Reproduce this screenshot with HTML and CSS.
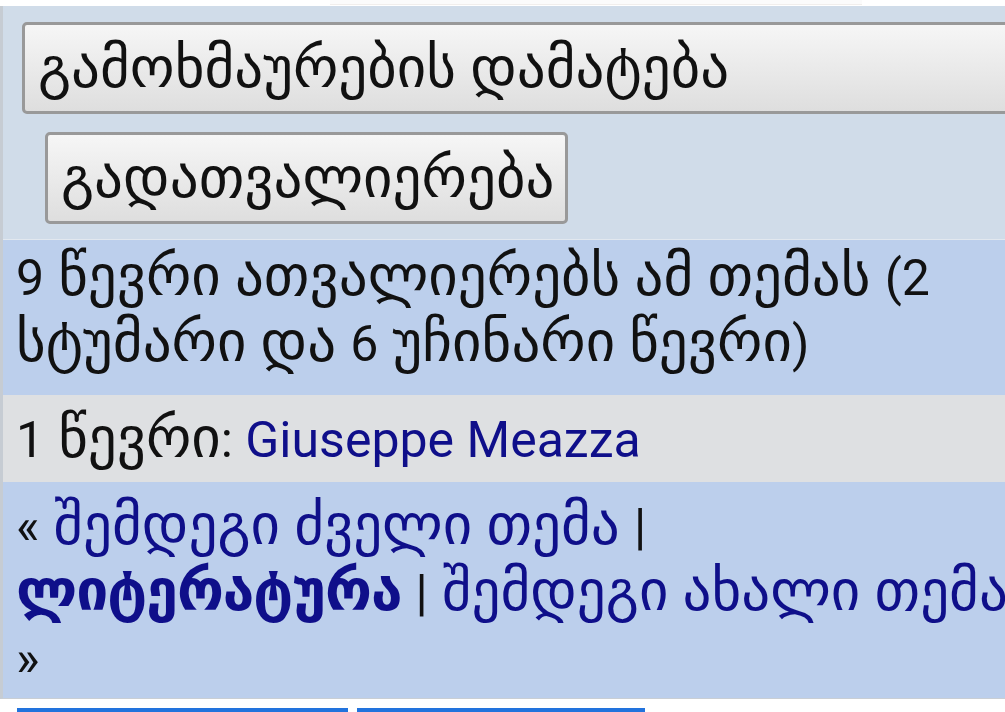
FILE: index.html
```html
<!DOCTYPE html>
<html lang="ka">
<head>
  <meta charset="UTF-8">
  <title>თემა</title>
  <meta name="viewport" content="width=device-width, initial-scale=1.0"/>
  <link rel="stylesheet" href="styles.css">
</head>
<body>
  <div class="topbar"><div class="search-edge"></div></div>
  <div class="panel">
    <div class="actions">
      <button class="btn btn-wide">გამოხმაურების დამატება</button>
      <button class="btn btn-small">გადათვალიერება</button>
    </div>
    <div class="row row-blue online"><span class="lat">9</span> წევრი ათვალიერებს ამ თემას <span class="lat">(2</span> სტუმარი და <span class="lat">6</span> უჩინარი წევრი<span class="lat">)</span></div>
    <div class="row row-gray members"><span class="lat">1</span> წევრი<span class="lat">: <a href="#">Giuseppe Meazza</a></span></div>
    <div class="row row-blue nav"><span class="lat">«</span> <a href="#">შემდეგი ძველი თემა</a> <span class="lat">|</span> <a href="#" class="strong">ლიტერატურა</a> <span class="lat">|</span> <a href="#">შემდეგი ახალი თემა</a> <span class="lat">»</span></div>
  </div>
  <div class="tabs">
    <span class="tab tab-first"></span>
    <span class="tab tab-second"></span>
  </div>
</body>
</html>
```

FILE: styles.css
```css
html, body { margin: 0; padding: 0; overflow: hidden; background: #fff; }
body { font-family: Roboto, "DejaVu Sans", sans-serif; font-size: 57px; color: #111; width: 1005px; height: 712px; }
.lat { font-size: 50px; line-height: 40px; }
.topbar { height: 6px; }
.search-edge { margin-left: 330px; width: 532px; height: 4px; border-bottom: 1px solid #f1eeec; background: #fbfbfb; }
.panel { border-left: 3px solid #c6ccd3; border-bottom: 1px solid #c9ced4; width: 1040px; }
.actions { background: #d0dce9; display: flex; flex-direction: column; align-items: flex-start; padding: 16px 0 15px; border-bottom: 1px solid #e2e8ef; }
.btn { font-family: inherit; font-size: 57px; color: #111; line-height: 60px; height: 92px; border: 3px solid #999; border-radius: 5px; background: linear-gradient(#f6f6f6, #dedede); text-align: left; cursor: pointer; }
.btn-wide { margin-left: 19px; width: 1010px; padding: 0 13px; }
.btn-small { margin-left: 42px; margin-top: 18px; padding: 0 11px 0 13px; }
.row { padding: 0 0 0 13px; line-height: 66px; }
.row-blue { background: #bccfec; }
.row-gray { background: #dee0e2; }
.online { padding-top: 3px; padding-bottom: 20px; }
.members { padding-top: 10px; padding-bottom: 11px; }
.nav { padding-top: 10px; padding-bottom: 8px; }
a { color: #0f0f8a; text-decoration: none; }
.strong { font-weight: bold; letter-spacing: -1px; }
.tabs { display: flex; gap: 9px; padding: 9px 0 0 17px; }
.tab { display: block; height: 10px; background: #2273dd; }
.tab-first { width: 331px; }
.tab-second { width: 288px; }
```
